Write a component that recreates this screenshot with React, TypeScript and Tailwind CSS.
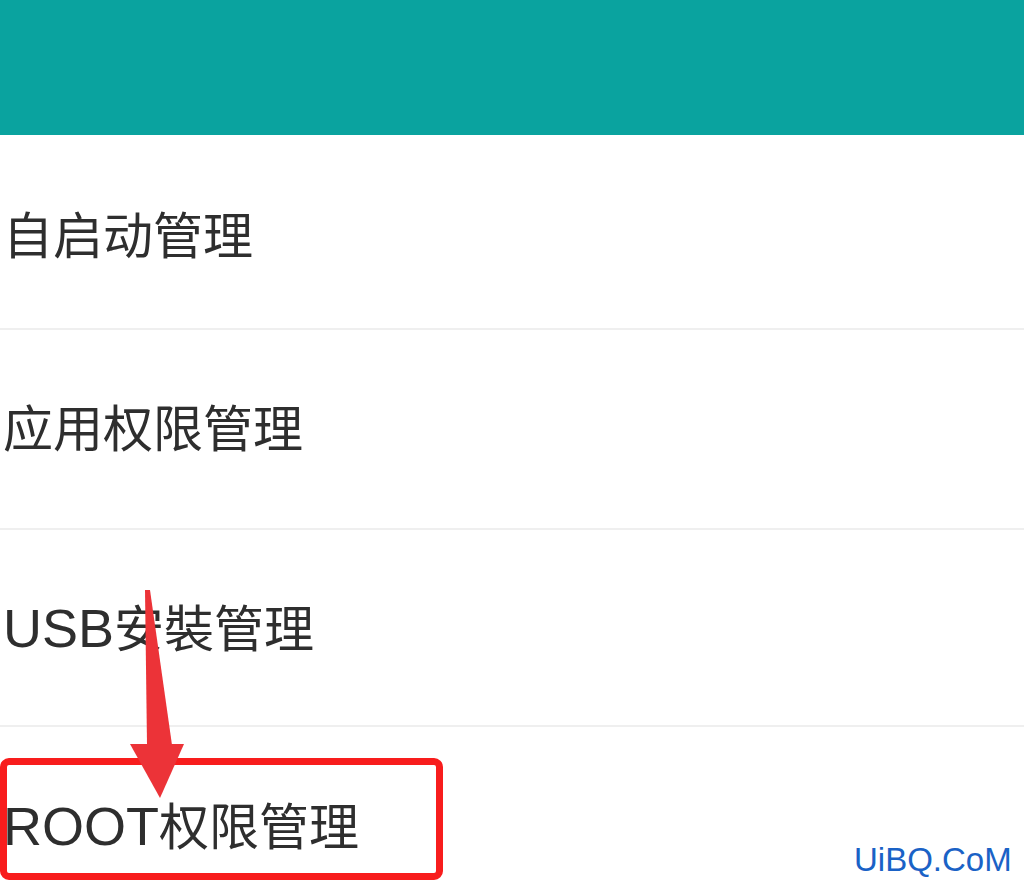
import React from "react";

const rows: { latin?: string; cjk: string; h: string; pt: string }[] = [
  { cjk: "自启动管理", h: "h-[195px]", pt: "pt-[10px]" },
  { cjk: "应用权限管理", h: "h-[200px]", pt: "pt-[2px]" },
  { latin: "USB", cjk: "安裝管理", h: "h-[197px]", pt: "pt-0" },
  { latin: "ROOT", cjk: "权限管理", h: "h-[198px]", pt: "pt-0" },
];

export default function App() {
  return (
    <div
      className="relative w-[1024px] h-[888px] overflow-hidden bg-white"
      style={{ fontFamily: '"Liberation Sans", "Noto Sans CJK SC", sans-serif' }}
    >
      <div className="h-[135px] bg-[#0aa39f]" />
      <div className="flex flex-col">
        {rows.map((r, i) => (
          <div
            key={r.cjk + i}
            className={`${r.h} ${r.pt} flex items-center pl-[3px] ${i < rows.length - 1 ? "border-b-2 border-[#efefef]" : ""}`}
          >
            <span className="text-[50px] leading-none text-[#2e2e2e] whitespace-nowrap">
              {r.latin ? <span className="text-[54px]">{r.latin}</span> : null}
              {r.cjk}
            </span>
          </div>
        ))}
      </div>

      {/* red highlight box */}
      <div className="absolute left-0 top-[758px] w-[443px] h-[122px] border-[7px] border-[#f81d1d] rounded-[9px]" />

      {/* red arrow */}
      <svg className="absolute left-0 top-0" width="300" height="888" viewBox="0 0 300 888">
        <polygon points="145,590 150,590 172,745 147,745" fill="#ec3338" />
        <polygon points="130,744 184,744 160,798" fill="#ec3338" />
      </svg>

      {/* watermark */}
      <div className="absolute left-[854px] top-[843px] text-[33px] leading-none text-[#1a62c6]">
        UiBQ.CoM
      </div>
    </div>
  );
}
